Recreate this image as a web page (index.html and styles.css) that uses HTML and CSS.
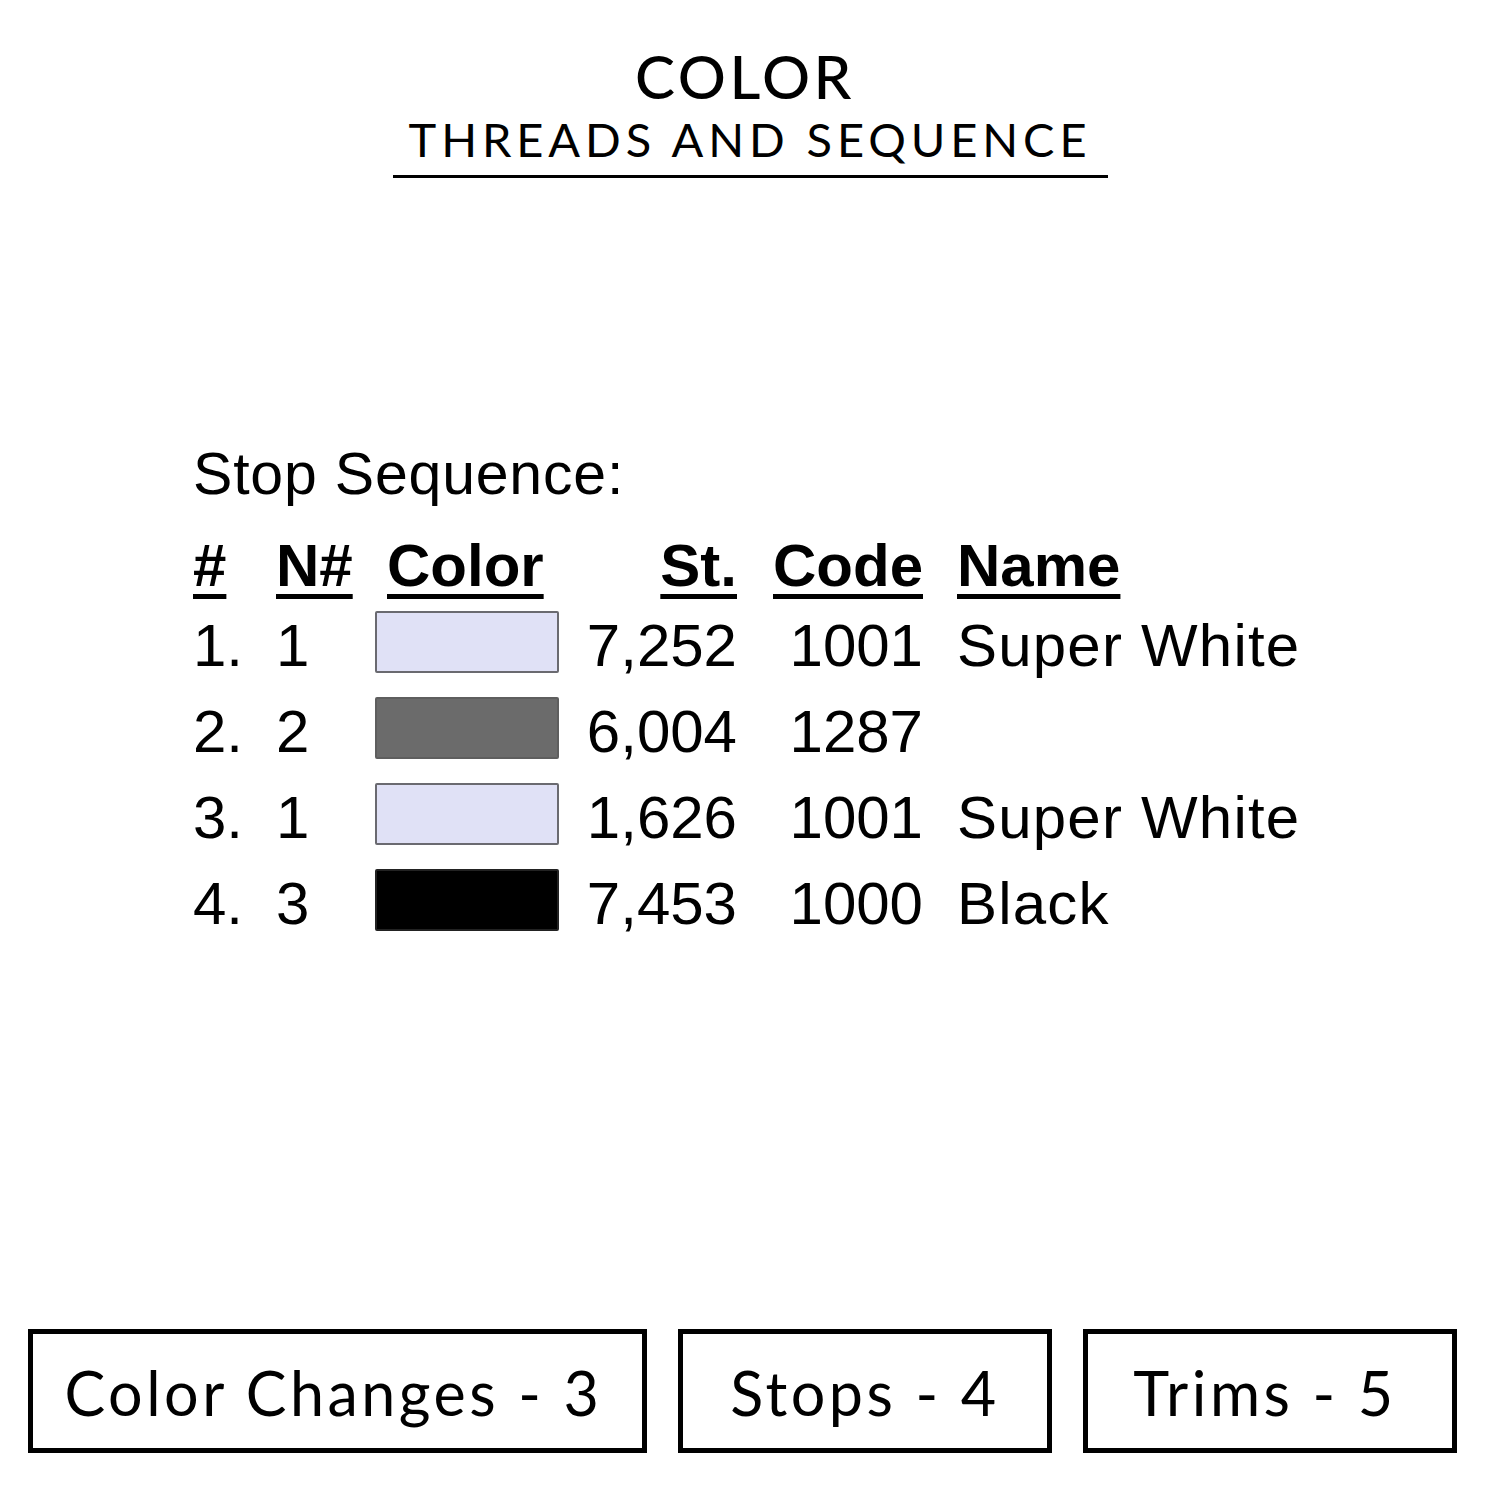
FILE: index.html
```html
<!DOCTYPE html>
<html lang="en">
<head>
<meta charset="utf-8">
<title>Color Threads and Sequence</title>
<link rel="stylesheet" href="styles.css">
</head>
<body>
<div class="page">
  <header class="heading">
    <div class="heading-title">COLOR</div>
    <div class="heading-sub">THREADS AND SEQUENCE</div>
    <div class="heading-rule"></div>
  </header>

  <section class="stops">
    <div class="stops-title">Stop Sequence:</div>
    <div class="seq">
      <div class="hd"><span class="ul">#</span></div>
      <div class="hd"><span class="ul">N#</span></div>
      <div class="hd hd-color"><span class="ul">Color</span></div>
      <div class="hd num"><span class="ul">St.</span></div>
      <div class="hd num"><span class="ul">Code</span></div>
      <div class="hd name"><span class="ul">Name</span></div>

      <div class="cell">1.</div>
      <div class="cell">1</div>
      <div class="cell"><span class="swatch swatch-white"></span></div>
      <div class="cell num">7,252</div>
      <div class="cell num">1001</div>
      <div class="cell name">Super White</div>

      <div class="cell">2.</div>
      <div class="cell">2</div>
      <div class="cell"><span class="swatch swatch-gray"></span></div>
      <div class="cell num">6,004</div>
      <div class="cell num">1287</div>
      <div class="cell name"></div>

      <div class="cell">3.</div>
      <div class="cell">1</div>
      <div class="cell"><span class="swatch swatch-white"></span></div>
      <div class="cell num">1,626</div>
      <div class="cell num">1001</div>
      <div class="cell name">Super White</div>

      <div class="cell">4.</div>
      <div class="cell">3</div>
      <div class="cell"><span class="swatch swatch-black"></span></div>
      <div class="cell num">7,453</div>
      <div class="cell num">1000</div>
      <div class="cell name">Black</div>
    </div>
  </section>

  <footer class="stats">
    <div class="stat stat-wide">Color Changes - 3</div>
    <div class="stat">Stops - 4</div>
    <div class="stat stat-trims">Trims - 5</div>
  </footer>
</div>
</body>
</html>
```

FILE: styles.css
```css
html, body {
  margin: 0;
  padding: 0;
  background: #ffffff;
}

.page {
  width: 1500px;
  height: 1500px;
  display: flex;
  flex-direction: column;
  color: #000;
}

/* ---------- heading ---------- */
.heading {
  display: flex;
  flex-direction: column;
  align-items: center;
  padding-top: 46px;
  font-family: "Lato", "Open Sans", sans-serif;
}

.heading-title {
  font-size: 60px;
  line-height: 60px;
  font-weight: 500;
  letter-spacing: 3.5px;
  margin-left: -10px;
}

.heading-sub {
  margin-top: 8px;
  font-size: 47px;
  line-height: 50px;
  font-weight: 400;
  letter-spacing: 4.9px;
}

.heading-rule {
  margin-top: 11px;
  width: 715px;
  height: 3px;
  background: #000;
  margin-left: 1px;
}

/* ---------- stop sequence ---------- */
.stops {
  margin-top: 266px;
  padding-left: 193px;
  font-family: "Liberation Sans", Arial, sans-serif;
}

.stops-title {
  font-size: 59px;
  line-height: 60px;
  letter-spacing: 0.8px;
}

.seq {
  margin-top: 26px;
  display: grid;
  grid-template-columns: 83px 99px 184px 178px 186px auto;
  grid-template-rows: 71px repeat(4, 86px);
  font-size: 60px;
}

.hd {
  font-weight: 700;
  line-height: 71px;
}

.ul {
  text-decoration: underline;
  text-decoration-thickness: 5px;
  text-underline-offset: 8px;
}

.hd-color {
  padding-left: 12px;
}

.cell {
  line-height: 86px;
  padding-top: 2px;
}

.num {
  text-align: right;
}

.name {
  padding-left: 34px;
}

.cell.name {
  letter-spacing: 1.2px;
}

.swatch {
  display: block;
  box-sizing: border-box;
  width: 184px;
  height: 62px;
  margin-top: 8px;
  border: 2px solid #6a6a70;
  border-radius: 2px;
}

.swatch-white { background: #e0e1f6; }
.swatch-gray  { background: #6b6b6b; border-color: #5e5e5e; }
.swatch-black { background: #000000; border-color: #222; }

/* ---------- stats boxes ---------- */
.stats {
  margin-top: auto;
  margin-bottom: 47px;
  padding-left: 28px;
  display: flex;
  gap: 31px;
  font-family: "Lato", "Open Sans", sans-serif;
}

.stat {
  box-sizing: border-box;
  width: 374px;
  height: 124px;
  border: 5px solid #000;
  display: flex;
  align-items: center;
  justify-content: center;
  font-size: 61px;
  letter-spacing: 3.5px;
  padding-top: 2px;
}

.stat-wide {
  width: 619px;
  padding-right: 8px;
}

.stat-trims {
  padding-right: 10px;
}
```
